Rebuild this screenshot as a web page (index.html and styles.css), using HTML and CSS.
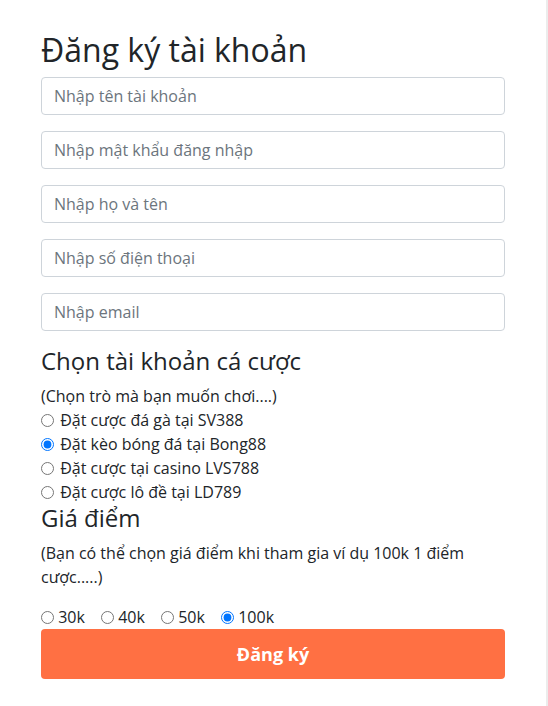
FILE: index.html
```html
<!DOCTYPE html>
<html lang="vi">
<head>
    <meta charset="UTF-8">
    <title>Đăng ký tài khoản</title>
    <link rel="stylesheet" href="styles.css">
</head>
<body>
    <div class="page">
        <form class="register-form">
            <h2 class="form-title">Đăng ký tài khoản</h2>

            <input type="text" class="form-input" placeholder="Nhập tên tài khoản">
            <input type="password" class="form-input" placeholder="Nhập mật khẩu đăng nhập">
            <input type="text" class="form-input" placeholder="Nhập họ và tên">
            <input type="text" class="form-input" placeholder="Nhập số điện thoại">
            <input type="email" class="form-input" placeholder="Nhập email">

            <!-- Chọn tài khoản -->
            <h4 class="section-title">Chọn tài khoản cá cược</h4>
            <p class="hint">(Chọn trò mà bạn muốn chơi....)</p>
            <div class="option"><label><input type="radio" name="game"> Đặt cược đá gà tại SV388</label></div>
            <div class="option"><label><input type="radio" name="game" checked> Đặt kèo bóng đá tại Bong88</label></div>
            <div class="option"><label><input type="radio" name="game"> Đặt cược tại casino LVS788</label></div>
            <div class="option"><label><input type="radio" name="game"> Đặt cược lô đề tại LD789</label></div>

            <!-- Giá điểm -->
            <h4 class="section-title">Giá điểm</h4>
            <p class="hint hint-long">(Bạn có thể chọn giá điểm khi tham gia ví dụ 100k 1 điểm cược.....)</p>
            <div class="price-row">
                <label class="inline-option"><input type="radio" name="price"> 30k</label>
                <label class="inline-option"><input type="radio" name="price"> 40k</label>
                <label class="inline-option"><input type="radio" name="price"> 50k</label>
                <label class="inline-option"><input type="radio" name="price" checked> 100k</label>
            </div>

            <button type="submit" class="submit-btn">Đăng ký</button>
        </form>
    </div>
</body>
</html>
```

FILE: styles.css
```css
/* General Page Styling */
body {
    margin: 0;
    font-family: 'Open Sans', 'Noto Sans', sans-serif;
    font-size: 16px;
    line-height: 1.5;
    color: #212529;
    background-color: #fff;
}

.page {
    width: 546px;
    min-height: 100vh;
    border-right: 2px solid #ececec;
}

.register-form {
    width: 464px;
    margin: 0 auto;
    padding-top: 31px;
}

.form-title {
    font-size: 32px;
    font-weight: 400;
    line-height: 1.2;
    margin: 0 0 8px;
}

/* Inputs */
.form-input {
    display: block;
    box-sizing: border-box;
    width: 100%;
    height: 38px;
    padding: 6px 12px;
    margin-bottom: 16px;
    font-family: inherit;
    font-size: 16px;
    color: #495057;
    border: 1px solid #ced4da;
    border-radius: 4px;
}

.form-input::placeholder {
    color: #6c757d;
}

.section-title {
    font-size: 24px;
    font-weight: 400;
    line-height: 1.2;
    margin: 0 0 8px;
}

.hint {
    margin: 0;
}

.hint-long {
    margin-bottom: 16px;
}

/* Radio options */
.option label,
.inline-option {
    cursor: pointer;
}

.option input,
.inline-option input {
    margin: 0 2px 0 0;
    vertical-align: -1px;
}

.inline-option input {
    margin-right: 0;
}

.inline-option {
    margin-right: 12px;
}

/* Button */
.submit-btn {
    display: block;
    width: 100%;
    height: 50px;
    border: none;
    border-radius: 4px;
    background-color: #ff7043;
    color: #fff;
    font-family: inherit;
    font-size: 18px;
    font-weight: 700;
    cursor: pointer;
}
```
